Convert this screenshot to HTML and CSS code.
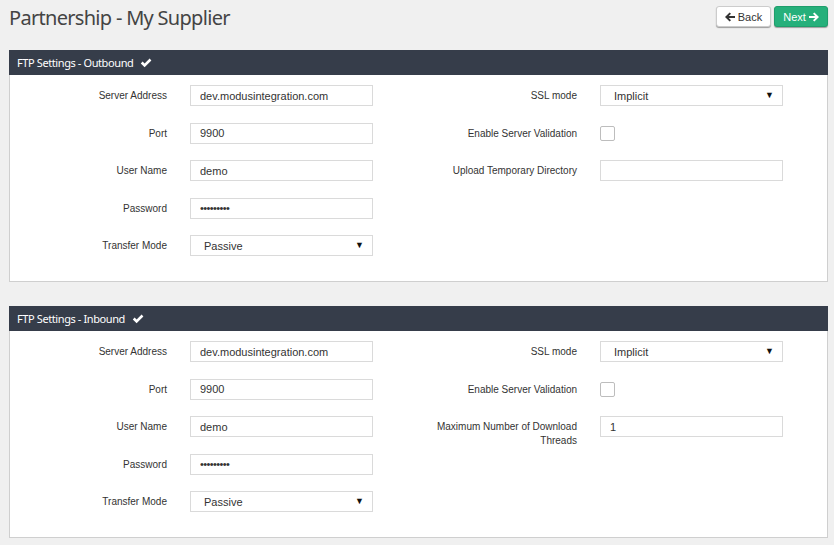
FILE: index.html
```html
<!DOCTYPE html>
<html>
<head>
<meta charset="utf-8">
<link rel="stylesheet" href="styles.css">
</head>
<body>
<div class="page">
  <div class="topbar">
    <h1 class="title">Partnership - My Supplier</h1>
    <div class="actions">
      <button class="btn btn-back"><svg class="ico" viewBox="0 0 10 10" width="10" height="10"><path d="M0 5 L4.6 0.4 L6 1.8 L3.8 4 H10 V6 H3.8 L6 8.2 L4.6 9.6 Z" fill="#333"/></svg>Back</button>
      <button class="btn btn-next">Next<svg class="ico ico-r" viewBox="0 0 10 10" width="10" height="10"><path d="M10 5 L5.4 0.4 L4 1.8 L6.2 4 H0 V6 H6.2 L4 8.2 L5.4 9.6 Z" fill="#fff"/></svg></button>
    </div>
  </div>

  <section class="panel">
    <div class="panel-head">FTP Settings - Outbound <svg class="check" viewBox="0 0 12 10" width="12" height="10"><path d="M0.8 5.4 L2.6 3.6 L4.6 5.6 L9.6 0.6 L11.4 2.4 L4.6 9.2 Z" fill="#fff"/></svg></div>
    <div class="panel-body">
      <div class="col">
        <div class="row"><label class="lbl">Server Address</label><input class="ctl" type="text" value="dev.modusintegration.com"></div>
        <div class="row"><label class="lbl">Port</label><input class="ctl" type="text" value="9900"></div>
        <div class="row"><label class="lbl">User Name</label><input class="ctl" type="text" value="demo"></div>
        <div class="row"><label class="lbl">Password</label><input class="ctl pw" type="password" value="ftpsecret"></div>
        <div class="row"><label class="lbl">Transfer Mode</label><div class="sel"><select class="ctl sel-ctl"><option>Passive</option></select><span class="arrow">▼</span></div></div>
      </div>
      <div class="col">
        <div class="row"><label class="lbl">SSL mode</label><div class="sel"><select class="ctl sel-ctl"><option>Implicit</option></select><span class="arrow">▼</span></div></div>
        <div class="row"><label class="lbl">Enable Server Validation</label><div class="cbwrap"><input class="cb" type="checkbox"></div></div>
        <div class="row"><label class="lbl">Upload Temporary Directory</label><input class="ctl" type="text" value=""></div>
      </div>
    </div>
  </section>

  <section class="panel">
    <div class="panel-head">FTP Settings - Inbound <svg class="check" viewBox="0 0 12 10" width="12" height="10"><path d="M0.8 5.4 L2.6 3.6 L4.6 5.6 L9.6 0.6 L11.4 2.4 L4.6 9.2 Z" fill="#fff"/></svg></div>
    <div class="panel-body">
      <div class="col">
        <div class="row"><label class="lbl">Server Address</label><input class="ctl" type="text" value="dev.modusintegration.com"></div>
        <div class="row"><label class="lbl">Port</label><input class="ctl" type="text" value="9900"></div>
        <div class="row"><label class="lbl">User Name</label><input class="ctl" type="text" value="demo"></div>
        <div class="row"><label class="lbl">Password</label><input class="ctl pw" type="password" value="ftpsecret"></div>
        <div class="row"><label class="lbl">Transfer Mode</label><div class="sel"><select class="ctl sel-ctl"><option>Passive</option></select><span class="arrow">▼</span></div></div>
      </div>
      <div class="col">
        <div class="row"><label class="lbl">SSL mode</label><div class="sel"><select class="ctl sel-ctl"><option>Implicit</option></select><span class="arrow">▼</span></div></div>
        <div class="row"><label class="lbl">Enable Server Validation</label><div class="cbwrap"><input class="cb" type="checkbox"></div></div>
        <div class="row"><label class="lbl">Maximum Number of Download Threads</label><input class="ctl" type="text" value="1"></div>
      </div>
    </div>
  </section>
</div>
</body>
</html>
```

FILE: styles.css
```css
* { box-sizing: border-box; }
html, body { margin: 0; padding: 0; }
body {
  background: #f0f0f0;
  font-family: "Liberation Sans", Arial, sans-serif;
  color: #333;
  width: 834px;
  height: 545px;
  overflow: hidden;
}
.page {
  padding: 0 6px 0 9px;
}
.topbar {
  display: flex;
  justify-content: space-between;
  align-items: flex-start;
  height: 50px;
}
.title {
  margin: 4px 0 0 0;
  font-family: "Noto Sans", "Open Sans", sans-serif;
  font-weight: 400;
  font-size: 20px;
  letter-spacing: -0.7px;
  line-height: 28px;
  color: #444;
}
.actions {
  display: flex;
  gap: 3px;
  margin-top: 6px;
}
.btn {
  height: 21px;
  font-family: "Liberation Sans", Arial, sans-serif;
  font-size: 11px;
  border-radius: 3px;
  padding: 0 6px;
  display: flex;
  align-items: center;
  gap: 3px;
  cursor: pointer;
}
.btn-back {
  width: 55px;
  background: #fff;
  color: #333;
  border: 1px solid #ccc;
  box-shadow: 0 1px 1px rgba(0,0,0,0.35);
  justify-content: center;
}
.btn-next {
  width: 54px;
  background: #26b07b;
  color: #fff;
  border: 1px solid #1f9e6c;
  box-shadow: 0 1px 1px rgba(0,0,0,0.35);
  justify-content: center;
}
.panel {
  margin-bottom: 24px;
}
.panel-head {
  height: 25px;
  background: #363d4a;
  color: #fff;
  font-family: "Noto Sans", "Open Sans", sans-serif;
  font-size: 11px;
  letter-spacing: -0.4px;
  line-height: 25px;
  padding-left: 8px;
  display: flex;
  align-items: center;
}
.check { margin-left: 7px; }
.panel-body {
  background: #fff;
  border: 1px solid #cfcfcf;
  border-top: none;
  display: grid;
  grid-template-columns: 410px 1fr;
  padding: 10px 0 25px;
}
.col {
  display: flex;
  flex-direction: column;
  gap: 16.5px;
}
.row {
  display: grid;
  grid-template-columns: 157px 183px;
  column-gap: 23px;
  align-items: start;
  min-height: 21px;
}
.lbl {
  text-align: right;
  font-size: 10px;
  line-height: 14px;
  padding-top: 4px;
  color: #333;
}
.ctl {
  width: 183px;
  height: 21px;
  border: 1px solid #dadada;
  background: #fff;
  font-family: "Liberation Sans", Arial, sans-serif;
  font-size: 11px;
  color: #333;
  padding: 0 9px;
  margin: 0;
  border-radius: 0;
  outline: none;
}
.pw { font-size: 11px; letter-spacing: -0.6px; }
.sel { position: relative; width: 183px; }
.sel-ctl {
  appearance: none;
  -webkit-appearance: none;
  padding-left: 13px;
  display: block;
}
.arrow {
  position: absolute;
  right: 9px;
  top: 5px;
  font-size: 9px;
  line-height: 11px;
  color: #111;
  pointer-events: none;
}
.cbwrap { height: 21px; display: flex; align-items: center; }
.cb {
  appearance: none;
  -webkit-appearance: none;
  width: 15px;
  height: 15px;
  margin: 0;
  border: 1px solid #bdbdbd;
  border-radius: 2px;
  background: #fff;
}
```
